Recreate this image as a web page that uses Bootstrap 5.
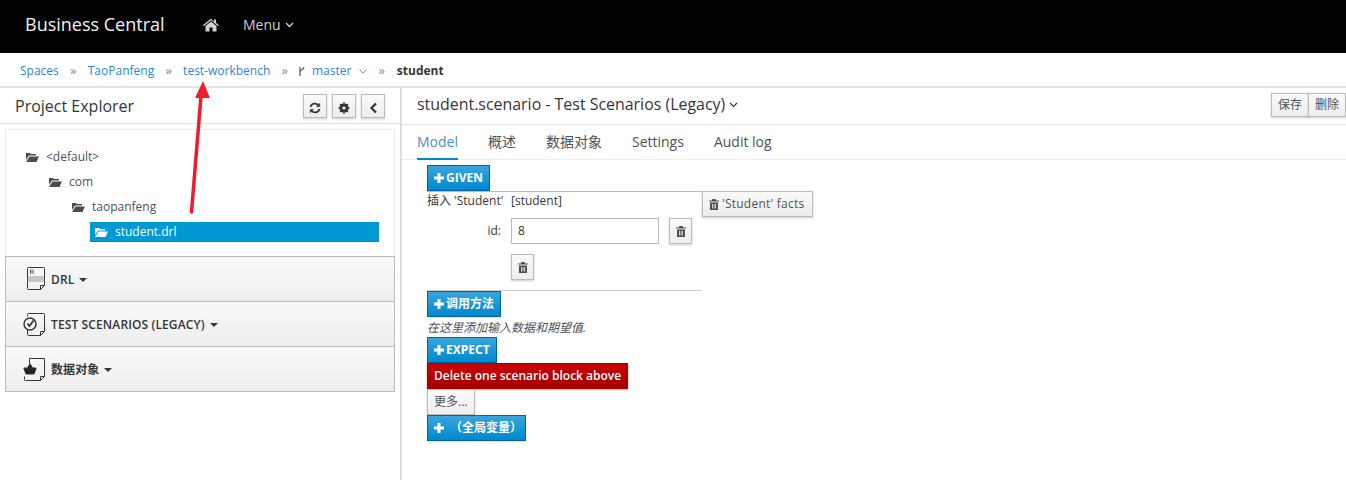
<!DOCTYPE html>
<html lang="en"><head><meta charset="utf-8"><title>Business Central</title>
<link href="https://cdn.jsdelivr.net/npm/bootstrap@5.3.0/dist/css/bootstrap.min.css" rel="stylesheet">
<style>
html,body{height:480px;overflow:hidden}
body{font-family:"Open Sans","Noto Sans CJK SC",sans-serif;font-size:12px;color:#363636;background:#fff;position:relative}
a{text-decoration:none}
.topbar{height:53px;background:#000;color:#fff;padding:0 0 4px 25px}
.brand{font-size:18px;width:178px;color:#f2f2f2}
.topmenu{color:#d1d1d1;font-size:14px;margin-left:24px}
.crumbs{height:35px;padding:3px 0 0 20px;border-bottom:2px solid #e4e4e4;font-size:12px}
.crumbs a{color:#2f86c8}
.sep{color:#8b8b8b;margin:0 11.250px;font-size:13px}
.sepbranch{margin-right:10px}
.sepend{margin-right:12px;margin-left:11px}
.branch{margin-right:6px}
.main{height:392px}
.leftcol{width:402px;border-right:2px solid #dedede}
.lefthead{height:36px;border-bottom:1px solid #e0e0e0;padding:0 15px 0 15px;font-size:16px;color:#363636}
.sqbtn{width:24px;height:24px;border:1px solid #bbb;background:linear-gradient(#fafafa,#ededed);box-shadow:0 1px 2px rgba(0,0,0,.2);padding:0;color:#4d5258}
.sqgap{gap:5px}
.leftbody{padding:5px 5px 0 5px}
.treebox{height:127px;border:1px solid #ececec;border-bottom:0;padding-top:14px}
.treerow{height:25px;font-size:12px;color:#4d5258;gap:7px}
.lvl0{padding-left:20px}.lvl1{padding-left:43px}.lvl2{padding-left:66px}
.treesel{height:20px;margin:3px 15px 0 84px;padding-left:5px;background:#0099d3;color:#fff;border-bottom:1px solid #0088ce;font-size:12px;gap:7px}
.accrow{height:45px;border:1px solid #bbb;border-top:0;background:linear-gradient(#fafafa,#ededed);font-weight:600;font-size:12px;color:#363636;gap:5px;letter-spacing:.12px}
.accfirst{border-top:1px solid #bbb;height:46px}
.acctext{padding-top:1px}
.accico{width:30px;margin-left:10px;display:flex;justify-content:flex-end}
.caretd{width:0;height:0;border:4.500px solid transparent;border-top-color:#363636;border-bottom:0;margin-top:1px}
.rhead{height:37px;border-bottom:1px solid #e4e4e4;padding:0 0 2px 15px;font-size:15.930px}
.grpbtn{height:24px;border:1px solid #bbb;background:linear-gradient(#fafafa,#ededed);font-size:12px;padding:0 6px;color:#4d5258;box-shadow:0 1px 2px rgba(0,0,0,.2)}
.grpbtn+.grpbtn{border-left:1px solid #bbb;margin-left:-1px}
.tabsrow{height:35px;border-bottom:1px solid #ececec;padding-left:15px;gap:30px;font-size:14px;color:#4d5258}
.tabitem{height:35px;display:flex;align-items:center;padding-bottom:2px;margin-bottom:-1px;position:relative}
.tabon{color:#4a90c8;border-bottom:2px solid #0088ce;padding-bottom:0}
.scen{padding:5px 0 0 25px}
.bluebtn{height:26px;display:inline-flex;align-items:center;gap:2px;background:linear-gradient(#39a5dc,#0088ce);border:1px solid #00659c;color:#fff;font-weight:700;font-size:12px;padding:0 6px;border-radius:0;box-shadow:0 1px 1px rgba(0,0,0,.1)}
.redbtn{height:26px;display:inline-flex;align-items:center;background:linear-gradient(#cc0000,#a30000);border:1px solid #a30000;color:#fff;font-weight:600;font-size:12px;padding:0 6px;box-shadow:0 1px 2px rgba(0,0,0,.3)}
.greybtn{height:26px;display:inline-flex;align-items:center;background:linear-gradient(#fafafa,#ededed);border:1px solid #bbb;color:#4d5258;font-size:12px;padding:0 7px 0 6px;box-shadow:0 1px 2px rgba(0,0,0,.2);gap:3px}
.wide{letter-spacing:.25px}
.trashbtn{width:23px;justify-content:center;padding:0}
.facts{width:275px;height:100px;border-top:1px solid #bbb;border-bottom:1px solid #ccc;font-size:12px}
.lblcol{width:74px;text-align:right;white-space:nowrap;flex:none}
.factline{height:26px;gap:10px}
.trashline{padding-top:10px;gap:10px}
.val{width:148px;height:26px;border:1px solid #bbb;padding:0 6px;display:flex;align-items:center;font-size:12px;color:#363636;background:#fff}
.hint{height:20px;font-style:italic;color:#4d5258;line-height:21px}
.globalbtn{gap:6px;padding-right:3px}
.annot{position:absolute;left:180px;top:78px;pointer-events:none}
</style></head><body>
<nav class="topbar d-flex align-items-center">
  <span class="brand">Business Central</span>
  <svg width="16" height="14" viewBox="0 0 16 14" fill="#d1d1d1"><path d="M8 .5 0 7.2l.8 1L8 2.300l7.200 5.900.8-1-3-2.500V1.500h-2v2.400z"/><path d="M8 3.500 2.500 8v5.500h4v-4h3v4h4V8z"/></svg>
  <span class="topmenu d-flex align-items-center gap-1">Menu
    <svg width="9" height="6" viewBox="0 0 9 6" fill="none" stroke="#d1d1d1" stroke-width="1.300"><path d="M1 1l3.500 3.500L8 1"/></svg></span>
</nav>
<div class="crumbs d-flex align-items-center">
  <a href="#">Spaces</a><span class="sep">»</span><a href="#">TaoPanfeng</a><span class="sep">»</span><a href="#">test-workbench</a><span class="sep sepbranch">»</span>
  <svg class="branch" width="8" height="11" viewBox="0 0 8 11" fill="none" stroke="#4d5258" stroke-width="1.200"><path d="M2 1v9M6 1c0 3-4 2.500-4 5"/></svg>
  <a href="#">master</a>
  <svg class="ms-2" width="8" height="5" viewBox="0 0 8 5" fill="none" stroke="#8b8b8b" stroke-width="1"><path d="M.5.5l3.500 3.500L7.500.5"/></svg>
  <span class="sep sepend">»</span><strong class="fw-bold">student</strong>
</div>
<div class="main d-flex">
  <aside class="leftcol">
    <div class="lefthead d-flex align-items-center justify-content-between">
      <span>Project Explorer</span>
      <span class="d-flex sqgap">
        <button class="sqbtn" aria-label="refresh"><svg width="12" height="12" viewBox="0 0 12 12" fill="none" stroke="#363636" stroke-width="1.800"><path d="M1.500 5a4.500 4.500 0 0 1 8-1.500M10.500 7a4.500 4.500 0 0 1-8 1.500"/><path d="M10.800 1v3.500H7.300M1.200 11V7.500h3.500" fill="#363636" stroke-width=".6"/></svg></button>
        <button class="sqbtn" aria-label="settings"><svg width="12" height="12" viewBox="0 0 12 12"><circle cx="6" cy="6" r="3.400" fill="none" stroke="#363636" stroke-width="2.400"/><path d="M6 .5v11M.5 6h11M2.100 2.100l7.800 7.800M9.900 2.100l-7.800 7.800" stroke="#363636" stroke-width="1.700"/><circle cx="6" cy="6" r="1.600" fill="#f4f4f4"/></svg></button>
        <button class="sqbtn" aria-label="collapse"><svg width="9" height="12" viewBox="0 0 9 12" fill="none" stroke="#363636" stroke-width="2.200"><path d="M7 1.500 2.500 6 7 10.500"/></svg></button>
      </span>
    </div>
    <div class="leftbody">
      <div class="treebox">
        <div class="treerow lvl0 d-flex align-items-center"><svg width="13" height="10" viewBox="0 0 13 10" fill="#4d4d4d"><path d="M0 1h4l1 1h5v1.500H3L0 8zM3.500 4.500H13L10.500 10H0z"/></svg><span>&lt;default&gt;</span></div>
        <div class="treerow lvl1 d-flex align-items-center"><svg width="13" height="10" viewBox="0 0 13 10" fill="#4d4d4d"><path d="M0 1h4l1 1h5v1.500H3L0 8zM3.500 4.500H13L10.500 10H0z"/></svg><span>com</span></div>
        <div class="treerow lvl2 d-flex align-items-center"><svg width="13" height="10" viewBox="0 0 13 10" fill="#4d4d4d"><path d="M0 1h4l1 1h5v1.500H3L0 8zM3.500 4.500H13L10.500 10H0z"/></svg><span>taopanfeng</span></div>
        <div class="treesel d-flex align-items-center"><svg width="13" height="10" viewBox="0 0 13 10" fill="#fff"><path d="M0 1h4l1 1h5v1.500H3L0 8zM3.500 4.500H13L10.500 10H0z"/></svg><span>student.drl</span></div>
      </div>
      <div class="accrow accfirst d-flex align-items-center"><span class="accico"><svg width="20" height="24" viewBox="0 0 20 24" fill="none" stroke="#363636"><path d="M2.500.5h15a1 1 0 0 1 1 1v17l-4 4h-12a1 1 0 0 1-1-1v-20a1 1 0 0 1 1-1z"/><path d="M1.500 10h17M1.500 12h17M1.500 14h17" stroke="#999"/><path d="M14.500 22.500v-4h4"/><path d="M4.500 7V3h2a1 1 0 0 1 0 2h-2m2 0 1 2" stroke-width=".7"/></svg></span><span class="acctext">DRL</span><span class="caretd"></span></div>
      <div class="accrow d-flex align-items-center"><span class="accico"><svg width="23" height="23" viewBox="0 0 23 23" fill="none" stroke="#363636"><path d="M5.500.5h15a1 1 0 0 1 1 1v17l-4 4h-12a1 1 0 0 1-1-1v-5M4.500 3.500v-2a1 1 0 0 1 1-1M17.500 22.500v-4h4"/><circle cx="7" cy="11" r="6" fill="#f4f4f4" stroke-width="1.500"/><path d="M4.500 10.500l2 2.500 4-5.500" stroke-width="1.800"/></svg></span><span class="acctext">TEST SCENARIOS (LEGACY)</span><span class="caretd"></span></div>
      <div class="accrow d-flex align-items-center"><span class="accico"><svg width="23" height="23" viewBox="0 0 23 23" fill="none" stroke="#363636"><path d="M6.500.5h15v18l-4 4h-15a1 1 0 0 1-1-1v-3M6.500.5v5M17.500 22.500v-4h4"/><path d="M1 10h12v1l-2 5H3l-2-5z" fill="#222"/><path d="M4 10l3-5 3 5" fill="#222" stroke="none"/></svg></span><span class="acctext">数据对象</span><span class="caretd"></span></div>
    </div>
  </aside>
  <section class="flex-grow-1">
    <div class="rhead d-flex align-items-center justify-content-between">
      <span class="d-flex align-items-center gap-1">student.scenario - Test Scenarios (Legacy)
        <svg width="9" height="6" viewBox="0 0 9 6" fill="none" stroke="#363636" stroke-width="1.200"><path d="M1 1l3.500 3.500L8 1"/></svg></span>
      <span class="d-flex"><button class="grpbtn">保存</button><button class="grpbtn">删除</button></span>
    </div>
    <div class="tabsrow d-flex">
      <span class="tabitem tabon">Model</span><span class="tabitem">概述</span><span class="tabitem">数据对象</span><span class="tabitem">Settings</span><span class="tabitem">Audit log</span>
    </div>
    <div class="scen">
      <div><button class="bluebtn"><svg width="10" height="10" viewBox="0 0 10 10" fill="#fff"><path d="M3.500 0h3v3.500H10v3H6.500V10h-3V6.500H0v-3h3.500z"/></svg>GIVEN</button></div>
      <div class="d-flex align-items-start">
        <div class="facts">
          <div class="factline d-flex"><span class="lblcol">插入 'Student'</span><span>[student]</span></div>
          <div class="factline d-flex align-items-center">
            <span class="lblcol">id:</span><span class="val">8</span>
            <button class="greybtn trashbtn" aria-label="delete"><svg width="10" height="11" viewBox="0 0 10 11" fill="#4d4d4d"><path d="M3.500 0h3l.7 1.500H10v1H0v-1h2.800zM1 3.500h8V11H1zM3 5v4.500h.8V5zm1.700 0v4.500h.8V5zm1.600 0v4.500h.8V5z" fill-rule="evenodd"/></svg></button>
          </div>
          <div class="trashline d-flex"><span class="lblcol"></span><button class="greybtn trashbtn" aria-label="delete"><svg width="10" height="11" viewBox="0 0 10 11" fill="#4d4d4d"><path d="M3.500 0h3l.7 1.500H10v1H0v-1h2.800zM1 3.500h8V11H1zM3 5v4.500h.8V5zm1.700 0v4.500h.8V5zm1.600 0v4.500h.8V5z" fill-rule="evenodd"/></svg></button></div>
        </div>
        <button class="greybtn wide"><svg width="10" height="11" viewBox="0 0 10 11" fill="#4d4d4d"><path d="M3.500 0h3l.7 1.500H10v1H0v-1h2.800zM1 3.500h8V11H1zM3 5v4.500h.8V5zm1.700 0v4.500h.8V5zm1.600 0v4.500h.8V5z" fill-rule="evenodd"/></svg>'Student' facts</button>
      </div>
      <div><button class="bluebtn"><svg width="10" height="10" viewBox="0 0 10 10" fill="#fff"><path d="M3.500 0h3v3.500H10v3H6.500V10h-3V6.500H0v-3h3.500z"/></svg>调用方法</button></div>
      <div class="hint">在这里添加输入数据和期望值.</div>
      <div><button class="bluebtn"><svg width="10" height="10" viewBox="0 0 10 10" fill="#fff"><path d="M3.500 0h3v3.500H10v3H6.500V10h-3V6.500H0v-3h3.500z"/></svg>EXPECT</button></div>
      <div><button class="redbtn">Delete one scenario block above</button></div>
      <div><button class="greybtn">更多...</button></div>
      <div><button class="bluebtn globalbtn"><svg width="10" height="10" viewBox="0 0 10 10" fill="#fff"><path d="M3.500 0h3v3.500H10v3H6.500V10h-3V6.500H0v-3h3.500z"/></svg><span>（全局变量）</span></button></div>
    </div>
  </section>
</div>
<svg class="annot" width="40" height="142" viewBox="0 0 40 142"><path d="M11.500 134 21 18" stroke="#ed1c2e" stroke-width="3.500" stroke-linecap="round" fill="none"/><path d="M15 20 23 3l7 17z" fill="#ed1c2e"/></svg>
<script src="https://cdn.jsdelivr.net/npm/bootstrap@5.3.0/dist/js/bootstrap.bundle.min.js"></script>
</body></html>
